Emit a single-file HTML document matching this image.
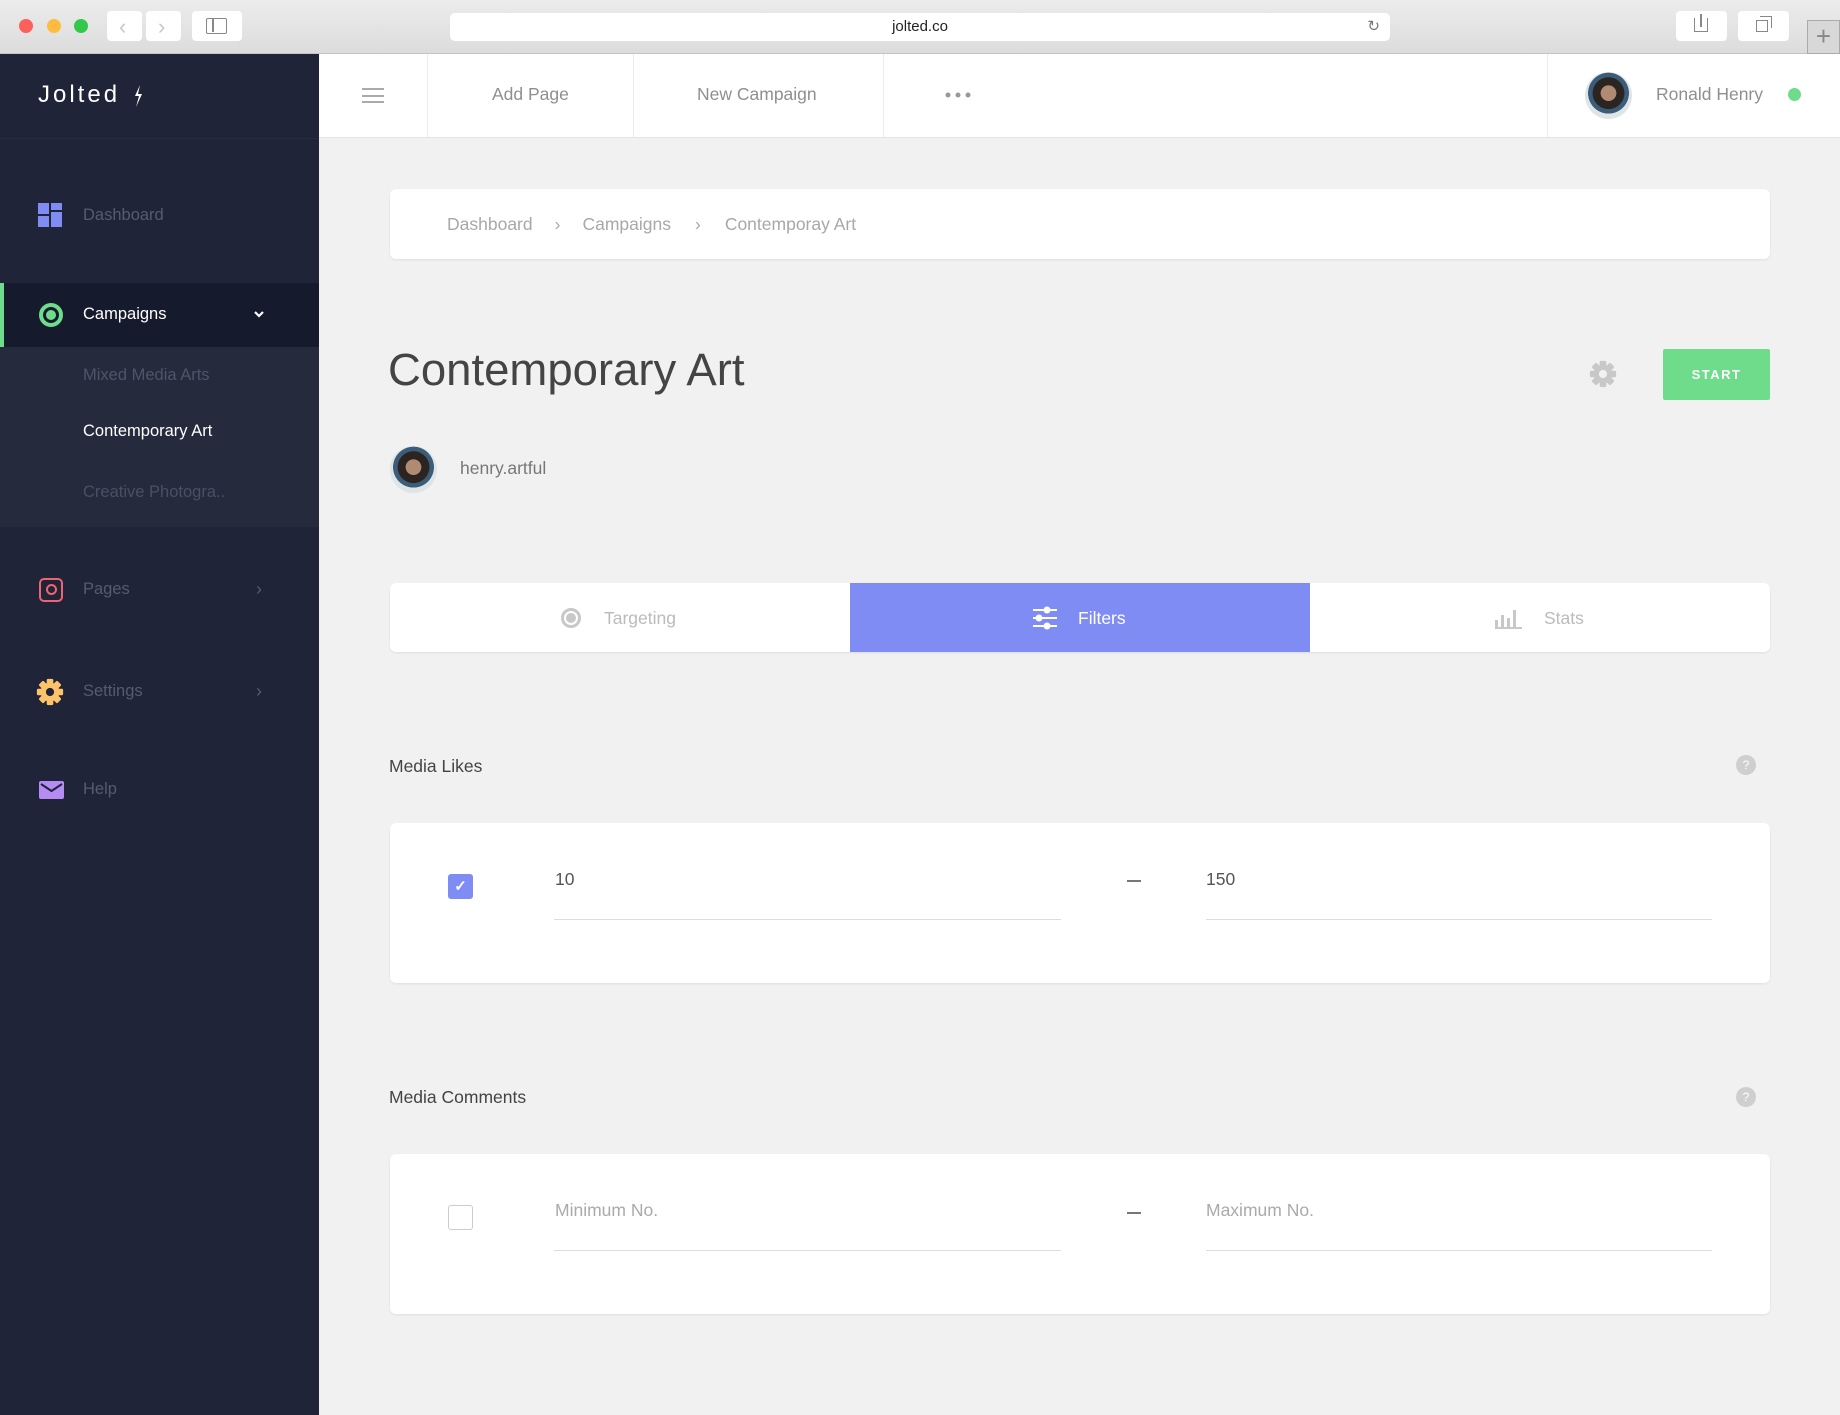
<!DOCTYPE html>
<html><head><meta charset="utf-8"><style>
*{margin:0;padding:0;box-sizing:border-box}
body{width:1840px;height:1415px;overflow:hidden;background:#f1f1f1;font-family:"Liberation Sans",sans-serif;position:relative}
.a{position:absolute}
.chrome{left:0;top:0;width:1840px;height:54px;background:linear-gradient(#ececec,#dcdcdc);border-bottom:1px solid #c4c4c4}
.dot{width:14px;height:14px;border-radius:50%;top:19px}
.btn{background:#fff;border-radius:4px;height:30px;top:11px}
.sb{left:0;top:54px;width:319px;height:1361px;background:#1f2438}
.top{left:319px;top:54px;width:1521px;height:84px;background:#fff;border-bottom:1px solid #e4e4e4}
.vd{top:54px;width:1px;height:84px;background:#ececec}
.nav{top:84px;font-size:17.5px;color:#8f8f8f}
.side{font-size:16.5px;color:#555b70;left:83px}
.card{background:#fff;border-radius:6px;box-shadow:0 1px 2px rgba(0,0,0,.08)}
.lbl{font-size:17.5px;color:#444}
.q{width:20px;height:20px;border-radius:50%;background:#cfcfcf;color:#fff;font-size:12px;text-align:center;line-height:20px}
.ln{height:1px;background:#ddd}
.av{border-radius:50%;background:radial-gradient(circle at 50% 45%,#b08a72 0 22%,#2b2420 23% 45%,#3b5d7a 46% 58%,#dfe4e6 59%)}
</style></head><body>
<svg width="0" height="0" style="position:absolute"><defs><g id="gear"><g><rect x="-4" y="-16" width="8" height="32" rx="1.5"/><rect x="-4" y="-16" width="8" height="32" rx="1.5" transform="rotate(45)"/><rect x="-4" y="-16" width="8" height="32" rx="1.5" transform="rotate(90)"/><rect x="-4" y="-16" width="8" height="32" rx="1.5" transform="rotate(135)"/><circle r="11.5"/></g></g></defs></svg>
<div class="a chrome"></div>
<div class="a dot" style="left:19px;background:#fc605c"></div>
<div class="a dot" style="left:47px;background:#fdbc40"></div>
<div class="a dot" style="left:74px;background:#34c84a"></div>
<div class="a btn" style="left:107px;width:35px"></div>
<div class="a btn" style="left:146px;width:35px"></div>
<div class="a" style="left:119px;top:14px;color:#c8c8c8;font-size:22px">‹</div>
<div class="a" style="left:158px;top:14px;color:#c8c8c8;font-size:22px">›</div>
<div class="a btn" style="left:192px;width:50px"></div>
<div class="a" style="left:206px;top:18px;width:21px;height:16px;border:1.5px solid #888;border-radius:2px"><div style="position:absolute;left:5px;top:0;width:1.5px;height:13px;background:#888"></div></div>
<div class="a" style="left:450px;top:13px;width:940px;height:28px;background:#fff;border-radius:5px;text-align:center;font-size:15px;line-height:28px;color:#222">jolted.co<span style="position:absolute;right:10px;color:#777">↻</span></div>
<div class="a btn" style="left:1676px;width:51px"></div>
<div class="a btn" style="left:1738px;width:51px"></div>
<div class="a" style="left:1694px;top:18px;width:14px;height:14px;border:1.5px solid #888;border-top:none"></div>
<div class="a" style="left:1700px;top:14px;width:1.5px;height:13px;background:#888"></div>
<div class="a" style="left:1756px;top:20px;width:12px;height:12px;border:1.5px solid #888"></div>
<div class="a" style="left:1760px;top:16px;width:12px;height:12px;border-top:1.5px solid #888;border-right:1.5px solid #888"></div>
<div class="a" style="left:1807px;top:20px;width:33px;height:34px;background:#d8d8d8;border:1px solid #aaa;color:#888;font-size:26px;text-align:center;line-height:30px">+</div>

<div class="a sb"></div>
<div class="a" style="left:0;top:138px;width:319px;height:1px;background:#262b40"></div>
<div class="a" style="left:38px;top:81px;color:#fff;font-size:24px;letter-spacing:3px">Jolted</div>
<svg class="a" style="left:133px;top:85px" width="10" height="22"><path d="M7 0 L2 11 L6 11 L3 22 L9 9 L5 9 Z" fill="#fff"/></svg>
<svg class="a" style="left:38px;top:203px" width="24" height="24"><rect x="0" y="0" width="11" height="11" fill="#7f8cf4"/><rect x="13" y="0" width="11" height="7" fill="#7f8cf4"/><rect x="0" y="13" width="11" height="11" fill="#7f8cf4"/><rect x="13" y="9" width="11" height="15" fill="#7f8cf4"/></svg>
<div class="a side" style="top:206px">Dashboard</div>
<div class="a" style="left:0;top:283px;width:319px;height:64px;background:#151a2c"></div>
<div class="a" style="left:0;top:283px;width:4px;height:64px;background:#6fdc8c"></div>
<div class="a" style="left:39px;top:303px;width:24px;height:24px;border-radius:50%;border:4px solid #6fdc8c"><div style="margin:3px;width:10px;height:10px;border-radius:50%;background:#6fdc8c"></div></div>
<div class="a side" style="top:305px;color:#fff">Campaigns</div>
<svg class="a" style="left:253px;top:310px" width="12" height="8"><path d="M2 2 L6 6 L10 2" stroke="#fff" stroke-width="2.2" fill="none"/></svg>
<div class="a" style="left:0;top:347px;width:319px;height:180px;background:#252a3d"></div>
<div class="a side" style="top:366px;color:#4f5568">Mixed Media Arts</div>
<div class="a side" style="top:422px;color:#fff">Contemporary Art</div>
<div class="a side" style="top:483px;color:#4a5063">Creative Photogra..</div>
<div class="a" style="left:39px;top:578px;width:24px;height:24px;border:2.5px solid #f0646e;border-radius:5px"><div style="margin:4px auto;width:11px;height:11px;border:2.5px solid #f0646e;border-radius:50%"></div></div>
<div class="a side" style="top:580px">Pages</div>
<div class="a" style="left:256px;top:579px;color:#555b70;font-size:18px">›</div>
<svg class="a" style="left:36px;top:678px" width="28" height="28" fill="#fcc36b"><g transform="translate(14 14) scale(0.82)"><use href="#gear"/><circle r="5" fill="#1f2438"/></g></svg>
<div class="a side" style="top:682px">Settings</div>
<div class="a" style="left:256px;top:681px;color:#555b70;font-size:18px">›</div>
<svg class="a" style="left:39px;top:781px" width="25" height="18"><rect width="25" height="18" rx="2" fill="#b48cf4"/><path d="M2 3 L12.5 10 L23 3" stroke="#1f2438" stroke-width="2" fill="none"/></svg>
<div class="a side" style="top:780px">Help</div>

<div class="a top"></div>
<div class="a vd" style="left:427px"></div><div class="a vd" style="left:633px"></div><div class="a vd" style="left:883px"></div><div class="a vd" style="left:1547px"></div>
<div class="a" style="left:362px;top:88px;width:22px;height:15px;border-top:2px solid #aaa;border-bottom:2px solid #aaa"><div style="margin-top:4.5px;height:2px;background:#aaa"></div></div>
<div class="a nav" style="left:492px">Add Page</div>
<div class="a nav" style="left:697px">New Campaign</div>
<svg class="a" style="left:945px;top:92px" width="26" height="6" fill="#999"><circle cx="3" cy="3" r="2.5"/><circle cx="13" cy="3" r="2.5"/><circle cx="23" cy="3" r="2.5"/></svg>
<div class="a av" style="left:1585px;top:72px;width:47px;height:47px"></div>
<div class="a nav" style="left:1656px">Ronald Henry</div>
<div class="a" style="left:1788px;top:88px;width:13px;height:13px;border-radius:50%;background:#6fdc8c"></div>

<div class="a card" style="left:390px;top:189px;width:1380px;height:70px"></div>
<div class="a" style="left:447px;top:214px;font-size:17.5px;color:#a8a8a8">Dashboard<span style="margin:0 22px">›</span>Campaigns<span style="margin:0 24px">›</span>Contemporay Art</div>
<div class="a" style="left:388px;top:344px;font-size:45.5px;color:#444">Contemporary Art</div>
<svg class="a" style="left:1589px;top:360px" width="28" height="28" fill="#c8c8c8"><g transform="translate(14 14) scale(0.82)"><use href="#gear"/><circle r="5" fill="#f1f1f1"/></g></svg>
<div class="a" style="left:1663px;top:349px;width:107px;height:51px;background:#6fdc8c;border-radius:2px;color:#fff;font-weight:bold;font-size:13px;letter-spacing:1.5px;text-align:center;line-height:51px">START</div>
<div class="a av" style="left:390px;top:446px;width:47px;height:47px"></div>
<div class="a" style="left:460px;top:458px;font-size:17.5px;color:#777">henry.artful</div>

<div class="a card" style="left:390px;top:583px;width:1380px;height:69px"></div>
<div class="a" style="left:850px;top:583px;width:460px;height:69px;background:#7f8cf4"></div>
<div class="a" style="left:561px;top:608px;width:20px;height:20px;border-radius:50%;border:3px solid #c8c8c8"><div style="margin:2px;width:10px;height:10px;border-radius:50%;background:#c8c8c8"></div></div>
<div class="a" style="left:604px;top:608px;font-size:17.5px;color:#bbb">Targeting</div>
<svg class="a" style="left:1033px;top:606px" width="24" height="24" stroke="#fff" stroke-width="2"><path d="M0 4H24M0 12H24M0 20H24"/><circle cx="14" cy="4" r="2.5" fill="#fff"/><circle cx="6" cy="12" r="2.5" fill="#fff"/><circle cx="14" cy="20" r="2.5" fill="#fff"/></svg>
<div class="a" style="left:1078px;top:608px;font-size:17.5px;color:#fff">Filters</div>
<svg class="a" style="left:1495px;top:607px" width="28" height="22" fill="#c8c8c8"><rect x="0" y="13" width="3" height="8"/><rect x="6" y="8" width="3" height="13"/><rect x="12" y="11" width="3" height="10"/><rect x="18" y="3" width="3" height="18"/><rect x="0" y="20" width="27" height="2"/></svg>
<div class="a" style="left:1544px;top:608px;font-size:17.5px;color:#bbb">Stats</div>

<div class="a lbl" style="left:389px;top:756px">Media Likes</div>
<div class="a q" style="left:1736px;top:755px">?</div>
<div class="a card" style="left:390px;top:823px;width:1380px;height:160px"></div>
<div class="a" style="left:448px;top:874px;width:25px;height:25px;border-radius:3px;background:#7f8cf4;color:#fff;font-size:15px;text-align:center;line-height:25px;font-weight:bold">✓</div>
<div class="a" style="left:555px;top:869px;font-size:17.5px;color:#555">10</div>
<div class="a ln" style="left:554px;top:919px;width:507px"></div>
<div class="a" style="left:1127px;top:880px;width:14px;height:1.5px;background:#777"></div>
<div class="a" style="left:1206px;top:869px;font-size:17.5px;color:#555">150</div>
<div class="a ln" style="left:1206px;top:919px;width:506px"></div>

<div class="a lbl" style="left:389px;top:1087px">Media Comments</div>
<div class="a q" style="left:1736px;top:1087px">?</div>
<div class="a card" style="left:390px;top:1154px;width:1380px;height:160px"></div>
<div class="a" style="left:448px;top:1205px;width:25px;height:25px;border-radius:3px;border:1.5px solid #ccc"></div>
<div class="a" style="left:555px;top:1200px;font-size:17.5px;color:#aaa">Minimum No.</div>
<div class="a ln" style="left:554px;top:1250px;width:507px"></div>
<div class="a" style="left:1127px;top:1212px;width:14px;height:1.5px;background:#777"></div>
<div class="a" style="left:1206px;top:1200px;font-size:17.5px;color:#aaa">Maximum No.</div>
<div class="a ln" style="left:1206px;top:1250px;width:506px"></div>
</body></html>
